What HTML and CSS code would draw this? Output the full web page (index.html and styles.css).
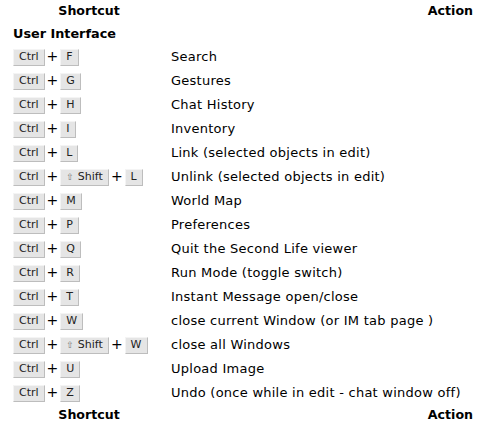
FILE: index.html
```html
<!DOCTYPE html>
<html>
<head>
<meta charset="utf-8">
<link rel="stylesheet" href="styles.css">
</head>
<body>
<table class="keys">
<thead>
<tr><th class="h-short">Shortcut</th><th class="h-act">Action</th></tr>
</thead>
<tbody>
<tr><td class="section" colspan="2">User Interface</td></tr>
<tr><td class="sc"><div class="combo"><kbd>Ctrl</kbd><span class="plus">+</span><kbd>F</kbd></div></td><td class="act">Search</td></tr>
<tr><td class="sc"><div class="combo"><kbd>Ctrl</kbd><span class="plus">+</span><kbd>G</kbd></div></td><td class="act">Gestures</td></tr>
<tr><td class="sc"><div class="combo"><kbd>Ctrl</kbd><span class="plus">+</span><kbd>H</kbd></div></td><td class="act">Chat History</td></tr>
<tr><td class="sc"><div class="combo"><kbd>Ctrl</kbd><span class="plus">+</span><kbd>I</kbd></div></td><td class="act">Inventory</td></tr>
<tr><td class="sc"><div class="combo"><kbd>Ctrl</kbd><span class="plus">+</span><kbd>L</kbd></div></td><td class="act">Link (selected objects in edit)</td></tr>
<tr><td class="sc"><div class="combo"><kbd>Ctrl</kbd><span class="plus">+</span><kbd><span class="arr">⇧</span>Shift</kbd><span class="plus">+</span><kbd>L</kbd></div></td><td class="act">Unlink (selected objects in edit)</td></tr>
<tr><td class="sc"><div class="combo"><kbd>Ctrl</kbd><span class="plus">+</span><kbd>M</kbd></div></td><td class="act">World Map</td></tr>
<tr><td class="sc"><div class="combo"><kbd>Ctrl</kbd><span class="plus">+</span><kbd>P</kbd></div></td><td class="act">Preferences</td></tr>
<tr><td class="sc"><div class="combo"><kbd>Ctrl</kbd><span class="plus">+</span><kbd>Q</kbd></div></td><td class="act">Quit the Second Life viewer</td></tr>
<tr><td class="sc"><div class="combo"><kbd>Ctrl</kbd><span class="plus">+</span><kbd>R</kbd></div></td><td class="act">Run Mode (toggle switch)</td></tr>
<tr><td class="sc"><div class="combo"><kbd>Ctrl</kbd><span class="plus">+</span><kbd>T</kbd></div></td><td class="act">Instant Message open/close</td></tr>
<tr><td class="sc"><div class="combo"><kbd>Ctrl</kbd><span class="plus">+</span><kbd>W</kbd></div></td><td class="act">close current Window (or IM tab page )</td></tr>
<tr><td class="sc"><div class="combo"><kbd>Ctrl</kbd><span class="plus">+</span><kbd><span class="arr">⇧</span>Shift</kbd><span class="plus">+</span><kbd>W</kbd></div></td><td class="act">close all Windows</td></tr>
<tr><td class="sc"><div class="combo"><kbd>Ctrl</kbd><span class="plus">+</span><kbd>U</kbd></div></td><td class="act">Upload Image</td></tr>
<tr><td class="sc"><div class="combo"><kbd>Ctrl</kbd><span class="plus">+</span><kbd>Z</kbd></div></td><td class="act">Undo (once while in edit - chat window off)</td></tr>
</tbody>
<tfoot>
<tr><th class="h-short">Shortcut</th><th class="h-act">Action</th></tr>
</tfoot>
</table>
</body>
</html>
```
FILE: styles.css
```css
html, body {
  margin: 0;
  background: #ffffff;
}
body {
  padding: 0 8px;
  font-family: "DejaVu Sans", Verdana, sans-serif;
  font-size: 13px;
  color: #000;
}
.keys {
  border-collapse: collapse;
  width: 471px;
}
.keys th {
  font-weight: bold;
  font-size: 12.6px;
  line-height: 16px;
  height: 22px;
  padding: 0;
  vertical-align: middle;
}
.keys tfoot th {
  height: 20px;
}
.h-short {
  width: 162px;
  text-align: center;
}
.h-act {
  text-align: right;
  padding-right: 6px !important;
}
.section {
  font-weight: bold;
  font-size: 12.8px;
  line-height: 16px;
  height: 23px;
  padding: 0 0 0 5px;
  vertical-align: middle;
}
.sc, .act {
  height: 24px;
  line-height: 16px;
  padding: 0;
  vertical-align: middle;
}
.sc {
  padding-left: 5px;
  white-space: nowrap;
}
.combo {
  display: flex;
  align-items: center;
  height: 24px;
  gap: 2px;
}
.act {
  padding-left: 1px;
  letter-spacing: 0.25px;
}
kbd {
  display: flex;
  align-items: center;
  gap: 4px;
  box-sizing: border-box;
  height: 17px;
  font-family: "DejaVu Sans", Verdana, sans-serif;
  font-size: 11px;
  padding: 0 5px;
  background: #e5e5e5;
  border: 1px solid;
  border-color: #f4f4f4 #bdbdbd #bdbdbd #f4f4f4;
  color: #222;
}
.plus {
  font-size: 14px;
  line-height: 16px;
  margin-top: -2px;
}
.arr {
  font-size: 9px;
  color: #777;
}
```
